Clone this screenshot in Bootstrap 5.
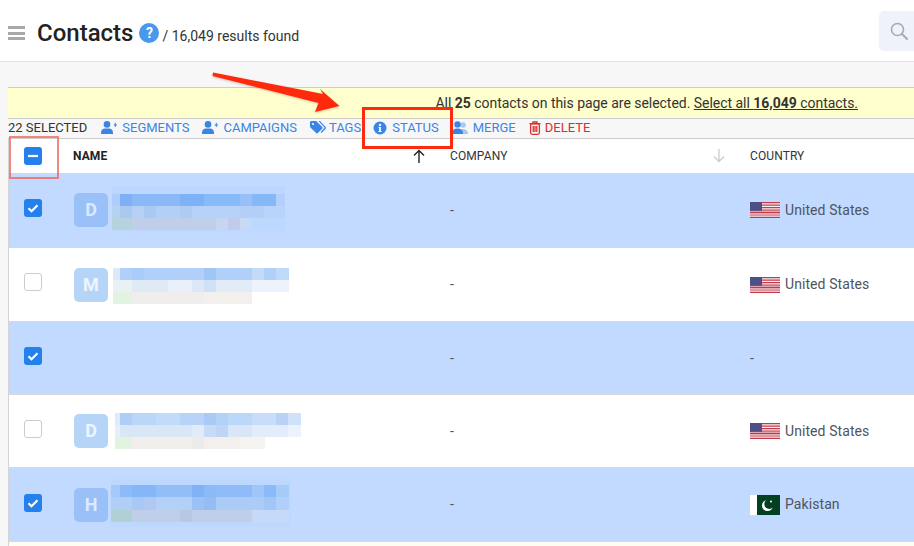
<!DOCTYPE html>
<html lang="en">
<head>
<meta charset="utf-8">
<title>Contacts</title>
<link href="https://cdn.jsdelivr.net/npm/bootstrap@5.3.0/dist/css/bootstrap.min.css" rel="stylesheet">
<style>
html,body{height:546px;overflow:hidden;background:#f7f7f7;font-family:Roboto,"Liberation Sans",sans-serif;color:#333}
.stage{position:relative;width:914px;height:546px;overflow:hidden}
.topbar{height:62px;background:#fff;border-bottom:1px solid #e5e5e5;padding:5px 0 0 8px}
.burger{width:17px;height:14px;margin-right:12px;display:flex;flex-direction:column;justify-content:space-between}
.burger i{display:block;height:3px;background:#a8a8a8}
.page-title{font-size:24px;font-weight:500;color:#222;line-height:30px;margin:0 6px 0 0}
.helpdot{width:20px;height:20px;border-radius:50%;background:#4a98ec;color:#fff;font-size:14px;font-weight:700;line-height:20px;text-align:center;margin-right:3px}
.found{font-size:14px;color:#333;padding-top:7px}
.findbtn{width:45px;height:40px;background:#eff2f8;border-radius:5px;margin:-5px -10px 0 0;padding-left:10px}
.spacerband{height:25px;background:#f7f7f7}
.noticeband{height:32px;margin-left:8px;background:#ffffcd;border-top:1px solid #ccc;border-bottom:1px solid #ccc;padding-right:56px;font-size:14px;line-height:30px;color:#333;letter-spacing:-.03px}
.noticeband a{color:#333;text-decoration:underline}
.actionbar{height:20px;margin-left:8px;font-size:13px;line-height:18px;padding-bottom:2px;border-bottom:1px solid #ccc;background:#f7f7f7;white-space:nowrap}
.actionbar span.tally{color:#333;margin-right:14px}
.act{color:#3a85e4;display:inline-flex;align-items:center;gap:5px;margin-right:13px}
.act.tagged{gap:3px;margin-right:12px}
.act.danger{color:#d9302c;gap:4px}
.gridwrap{margin-left:8px;border-left:1px solid #d4d4d4;background:#fff;height:408px;overflow:hidden}
.peopletable{table-layout:fixed;width:905px;margin:0;--bs-table-bg:transparent;border-collapse:separate;border-spacing:0}
.peopletable th,.peopletable td{padding:0 0 0 8px;vertical-align:middle;border-bottom:1px solid #d9d9d9;overflow:hidden;white-space:nowrap;box-shadow:none;color:#4e5560;font-size:14px;letter-spacing:.08px}
.peopletable th{height:34px;font-size:12px;font-weight:400;color:#333;letter-spacing:.1px;border-bottom:0;padding-bottom:1px}
.peopletable th.strong{font-weight:700;color:#222}
.peopletable td.namecell{padding:0 0 0 9px}
.peopletable th.boxcell{padding:0 0 0 15px}
.peopletable td.boxcell{padding:0 0 5px 15px}
.peopletable tr.tail>td.boxcell{padding-bottom:3px}
.peopletable tr.chosen>td{background:#c2daff}
.peopletable tr.plain>td{background:#fff}
.peopletable tr.lastrow>td{background:#fffdf0;height:70px}
.peopletable tr.r75>td{height:75px}
.r74{height:74px}.r73{height:73px}
.tick{display:block;width:18px;height:18px;border-radius:3px;background:#2480ea}
.tick svg{display:block}
.tick.blank{background:#fff;border:1px solid #ccc}
.headcell{display:flex;justify-content:space-between;align-items:center;padding-right:17px}
.initial{width:34px;height:34px;border-radius:5px;font-size:18px;font-weight:700;line-height:34px;text-align:center;flex:none;letter-spacing:0}
.chosen .initial{background:#99c1f8;color:#dbeafe}
.plain .initial{background:#b6d4f8;color:#eef5fe}
.namecell svg{display:block;flex:none;filter:blur(.6px)}
.flagged{display:flex;align-items:center;gap:5px}
.mark-box{position:absolute;border-style:solid;pointer-events:none}
.box-a{left:362px;top:107px;width:91px;height:42px;border-width:3px;border-color:#ff2a0d}
.box-b{left:9px;top:136px;width:50px;height:43px;border-width:2px;border-color:rgba(238,96,84,.75)}
.arrow-layer{position:absolute;left:205px;top:65px;pointer-events:none;filter:drop-shadow(0 1px 1px rgba(120,60,40,.3))}
</style>
</head>
<body>
<div class="stage">
  <header class="topbar d-flex align-items-center">
    <div class="burger"><i></i><i></i><i></i></div>
    <h1 class="page-title">Contacts</h1>
    <div class="helpdot">?</div>
    <div class="found">/ 16,049 results found</div>
    <div class="findbtn ms-auto d-flex align-items-center">
      <svg width="20" height="20" viewBox="0 0 20 20" fill="none" stroke="#a6aab9" stroke-width="1.6"><circle cx="8.5" cy="8.5" r="6"/><path d="M13 13l5 5" stroke-linecap="round" stroke-width="2"/></svg>
    </div>
  </header>
  <div class="spacerband"></div>
  <div class="noticeband text-end">All <b>25</b> contacts on this page are selected. <a href="#">Select all <b>16,049</b> contacts.</a></div>
  <div class="actionbar d-flex align-items-center">
    <span class="tally">22 SELECTED</span>
    <span class="act"><svg width="16" height="13" viewBox="0 0 16 13" fill="#3a85e4"><circle cx="6" cy="3.4" r="3.3"/><path d="M0 13v-1.6C0 9 2 7.4 4 7.4h4c2 0 4 1.6 4 4V13z"/><path d="M12.700 3.400h1.100v-1.600h1v1.600H16v1h-1.200V6h-1V4.400h-1.100z"/></svg>SEGMENTS</span>
    <span class="act"><svg width="16" height="13" viewBox="0 0 16 13" fill="#3a85e4"><circle cx="6" cy="3.4" r="3.3"/><path d="M0 13v-1.6C0 9 2 7.4 4 7.4h4c2 0 4 1.6 4 4V13z"/><path d="M12.700 3.400h1.100v-1.600h1v1.600H16v1h-1.200V6h-1V4.400h-1.100z"/></svg>CAMPAIGNS</span>
    <span class="act tagged"><svg width="16" height="13" viewBox="0 0 16 13" fill="#3a85e4"><path d="M0 1.300C0 .6.600 0 1.300 0h4.400c.4 0 .7.1 1 .4l5.500 5.500c.5.5.5 1.300 0 1.800l-4.300 4.300c-.5.500-1.300.500-1.800 0L.4 6.500C.1 6.200 0 5.900 0 5.500z"/><path d="M8.500 0h1c.4 0 .7.100 1 .4l5.100 5.500c.5.5.5 1.300 0 1.800l-4 4.200-.9-.9 3.900-4.200z"/><circle cx="3" cy="3" r="1.100" fill="#f7f7f7"/></svg>TAGS</span>
    <span class="act"><svg width="14" height="14" viewBox="0 0 14 14"><circle cx="7" cy="7" r="6.500" fill="#3a85e4"/><circle cx="7" cy="4" r="1.200" fill="#fff"/><path d="M5.600 6h2.300v4h.7v1H5.400v-1h.8V7h-.6z" fill="#fff"/></svg>STATUS</span>
    <span class="act"><svg width="16" height="13" viewBox="0 0 16 13"><circle cx="11" cy="4" r="2.800" fill="#a9c8ef"/><path d="M7 13c0-3.500 1.500-5 4-5s5 1.500 5 5z" fill="#a9c8ef"/><circle cx="5.500" cy="3.400" r="3.200" fill="#3a85e4"/><path d="M0 13c0-3.800 2-5.500 5.500-5.500S11 9.200 11 13z" fill="#3a85e4"/></svg>MERGE</span>
    <span class="act danger"><svg width="12" height="14" viewBox="0 0 12 14" fill="none" stroke="#d9302c" stroke-width="1.300"><path d="M.5 2.700h11M4 2.500V1h4v1.500"/><rect x="1.600" y="2.800" width="8.800" height="10.500" rx="1.500"/><path d="M4.200 5v6M6 5v6M7.800 5v6"/></svg>DELETE</span>
  </div>
  <div class="gridwrap">
    <table class="table peopletable">
      <colgroup><col style="width:56px"><col style="width:377px"><col style="width:300px"><col style="width:172px"></colgroup>
      <thead>
        <tr>
          <th class="boxcell"><span class="tick"><svg width="18" height="18" viewBox="0 0 18 18"><path d="M4 9h10" stroke="#fff" stroke-width="2.200"/></svg></span></th>
          <th class="strong"><div class="headcell"><span>NAME</span><svg width="12" height="14" viewBox="0 0 12 14" fill="none" stroke="#222" stroke-width="1.400"><path d="M6 14V1.500M1 6.500l5-5 5 5"/></svg></div></th>
          <th><div class="headcell"><span>COMPANY</span><svg width="12" height="14" viewBox="0 0 12 14" fill="none" stroke="#cfcfcf" stroke-width="1.400"><path d="M6 0v12.500M1 7.500l5 5 5-5"/></svg></div></th>
          <th>COUNTRY</th>
        </tr>
      </thead>
      <tbody>
        <tr class="chosen r75">
          <td class="boxcell"><span class="tick"><svg width="18" height="18" viewBox="0 0 18 18"><path d="M4.500 9.200l3 3 6-6" fill="none" stroke="#fff" stroke-width="2.200"/></svg></span></td>
          <td class="namecell"><div class="d-flex align-items-center"><div class="initial">D</div>
            <svg width="200" height="60" viewBox="108 180 200 60"><rect x="112" y="186" width="173" height="45" fill="#bcd6fd"/><g>
            <rect x="112" y="194" width="8" height="12" fill="#aecdfb"/><rect x="120" y="194" width="12" height="12" fill="#7fb0f7"/><rect x="132" y="194" width="48" height="12" fill="#8bb9f8"/><rect x="180" y="194" width="24" height="12" fill="#7eb2f7"/><rect x="204" y="194" width="36" height="12" fill="#88b9f9"/><rect x="240" y="194" width="12" height="12" fill="#97c0f8"/><rect x="252" y="194" width="24" height="12" fill="#86b8f8"/><rect x="276" y="194" width="9" height="12" fill="#b3d0fc"/>
            <rect x="112" y="206" width="8" height="12" fill="#b6d2f3"/><rect x="120" y="206" width="12" height="12" fill="#aac9ef"/><rect x="132" y="206" width="12" height="12" fill="#b5cff5"/><rect x="144" y="206" width="12" height="12" fill="#a9c9f3"/><rect x="156" y="206" width="24" height="12" fill="#b2cff5"/><rect x="180" y="206" width="12" height="12" fill="#aecbf2"/><rect x="192" y="206" width="48" height="12" fill="#b7d2f8"/><rect x="240" y="206" width="24" height="12" fill="#b3cff8"/><rect x="264" y="206" width="21" height="12" fill="#b9d4fb"/>
            <rect x="112" y="218" width="20" height="12" fill="#b4d3dc"/><rect x="132" y="218" width="84" height="12" fill="#c0cfe9"/><rect x="216" y="218" width="12" height="12" fill="#c6d6f2"/><rect x="228" y="218" width="12" height="12" fill="#c0cce9"/><rect x="240" y="218" width="12" height="12" fill="#c8d9f6"/><rect x="252" y="218" width="33" height="12" fill="#bbd8fd"/></g></svg></div></td>
          <td>-</td>
          <td><div class="flagged"><svg width="30" height="16" viewBox="0 0 30 16"><rect width="30" height="16" fill="#f3f3f6"/><path d="M0 0h30v1.200H0zM0 2.500h30v1.200H0zM0 5h30v1.200H0zM0 7.500h30v1.200H0zM0 10h30v1.200H0zM0 12.400h30v1.200H0zM0 14.800h30V16H0z" fill="#c23b4a"/><path d="M0 8.700h30v1.300H0zM0 11.200h30v1.200H0z" fill="#e2a3ad"/><rect width="12" height="8.800" fill="#4d4f86"/></svg>United States</div></td>
        </tr>
        <tr class="plain r74">
          <td class="boxcell"><span class="tick blank"></span></td>
          <td class="namecell"><div class="d-flex align-items-center"><div class="initial">M</div>
            <svg width="200" height="60" viewBox="108 254 200 60"><rect x="113" y="267" width="7" height="12" fill="#dce9fb"/><rect x="120" y="267" width="12" height="12" fill="#b0d0f9"/><rect x="132" y="267" width="12" height="12" fill="#a9ccf8"/><rect x="144" y="267" width="60" height="12" fill="#b1d0f9"/><rect x="204" y="267" width="12" height="12" fill="#a0c6f6"/><rect x="216" y="267" width="36" height="12" fill="#b1d0f9"/><rect x="252" y="267" width="12" height="12" fill="#c3dbf8"/><rect x="264" y="267" width="12" height="12" fill="#b1d0f7"/><rect x="276" y="267" width="13" height="12" fill="#bfd9f9"/>
            <rect x="113" y="279" width="19" height="12" fill="#e9f1f5"/><rect x="132" y="279" width="36" height="12" fill="#dfeaf6"/><rect x="168" y="279" width="24" height="12" fill="#e9f0fa"/><rect x="192" y="279" width="12" height="12" fill="#dce8f7"/><rect x="204" y="279" width="12" height="12" fill="#cfe1f6"/><rect x="216" y="279" width="36" height="12" fill="#e1ecf8"/><rect x="252" y="279" width="37" height="12" fill="#ecf3fc"/>
            <rect x="113" y="291" width="19" height="12" fill="#e3f3e2"/><rect x="132" y="291" width="72" height="12" fill="#f0eeec"/><rect x="204" y="291" width="48" height="12" fill="#f2efed"/></svg></div></td>
          <td>-</td>
          <td><div class="flagged"><svg width="30" height="16" viewBox="0 0 30 16"><rect width="30" height="16" fill="#f3f3f6"/><path d="M0 0h30v1.200H0zM0 2.500h30v1.200H0zM0 5h30v1.200H0zM0 7.500h30v1.200H0zM0 10h30v1.200H0zM0 12.400h30v1.200H0zM0 14.800h30V16H0z" fill="#c23b4a"/><path d="M0 8.700h30v1.300H0zM0 11.200h30v1.200H0z" fill="#e2a3ad"/><rect width="12" height="8.800" fill="#4d4f86"/></svg>United States</div></td>
        </tr>
        <tr class="chosen r73">
          <td class="boxcell"><span class="tick"><svg width="18" height="18" viewBox="0 0 18 18"><path d="M4.500 9.200l3 3 6-6" fill="none" stroke="#fff" stroke-width="2.200"/></svg></span></td>
          <td class="namecell"></td>
          <td>-</td>
          <td>-</td>
        </tr>
        <tr class="plain r73">
          <td class="boxcell"><span class="tick blank"></span></td>
          <td class="namecell"><div class="d-flex align-items-center"><div class="initial">D</div>
            <svg width="200" height="60" viewBox="108 401 200 60"><rect x="115" y="413" width="5" height="12" fill="#dfebfb"/><rect x="120" y="413" width="12" height="12" fill="#aecef8"/><rect x="132" y="413" width="24" height="12" fill="#bad6f9"/><rect x="156" y="413" width="24" height="12" fill="#c2dbf9"/><rect x="180" y="413" width="24" height="12" fill="#b7d4f8"/><rect x="204" y="413" width="12" height="12" fill="#a8caf5"/><rect x="216" y="413" width="12" height="12" fill="#b4d2f8"/><rect x="228" y="413" width="24" height="12" fill="#bcd8f9"/><rect x="252" y="413" width="24" height="12" fill="#c7ddf9"/><rect x="276" y="413" width="12" height="12" fill="#b7d2f5"/><rect x="288" y="413" width="13" height="12" fill="#d0e1fa"/>
            <rect x="115" y="425" width="5" height="12" fill="#e6f0f5"/><rect x="120" y="425" width="72" height="12" fill="#d8e6f6"/><rect x="192" y="425" width="12" height="12" fill="#e2ecf8"/><rect x="204" y="425" width="12" height="12" fill="#c6dcf6"/><rect x="216" y="425" width="12" height="12" fill="#bfd5f5"/><rect x="228" y="425" width="24" height="12" fill="#d8e6f7"/><rect x="252" y="425" width="36" height="12" fill="#e2ecfa"/><rect x="288" y="425" width="13" height="12" fill="#ecf3fd"/>
            <rect x="115" y="437" width="17" height="12" fill="#e3f3e2"/><rect x="132" y="437" width="60" height="12" fill="#f1eeec"/><rect x="192" y="437" width="12" height="12" fill="#ebebe9"/><rect x="204" y="437" width="36" height="12" fill="#f3efed"/><rect x="240" y="437" width="25" height="12" fill="#f5f4f1"/></svg></div></td>
          <td>-</td>
          <td><div class="flagged"><svg width="30" height="16" viewBox="0 0 30 16"><rect width="30" height="16" fill="#f3f3f6"/><path d="M0 0h30v1.200H0zM0 2.500h30v1.200H0zM0 5h30v1.200H0zM0 7.500h30v1.200H0zM0 10h30v1.200H0zM0 12.400h30v1.200H0zM0 14.800h30V16H0z" fill="#c23b4a"/><path d="M0 8.700h30v1.300H0zM0 11.200h30v1.200H0z" fill="#e2a3ad"/><rect width="12" height="8.800" fill="#4d4f86"/></svg>United States</div></td>
        </tr>
        <tr class="chosen r74 tail">
          <td class="boxcell"><span class="tick"><svg width="18" height="18" viewBox="0 0 18 18"><path d="M4.500 9.200l3 3 6-6" fill="none" stroke="#fff" stroke-width="2.200"/></svg></span></td>
          <td class="namecell"><div class="d-flex align-items-center"><div class="initial">H</div>
            <svg width="200" height="60" viewBox="108 475 200 60"><rect x="111" y="479" width="180" height="48" fill="#bdd7fd"/><rect x="111" y="485" width="9" height="12" fill="#a4c8f9"/><rect x="120" y="485" width="12" height="12" fill="#8dbaf8"/><rect x="132" y="485" width="24" height="12" fill="#85b6f7"/><rect x="156" y="485" width="36" height="12" fill="#92bef8"/><rect x="192" y="485" width="12" height="12" fill="#7fb2f7"/><rect x="204" y="485" width="12" height="12" fill="#8cbaf8"/><rect x="216" y="485" width="36" height="12" fill="#8fbbf8"/><rect x="252" y="485" width="12" height="12" fill="#a0c5f8"/><rect x="264" y="485" width="12" height="12" fill="#8abaf9"/><rect x="276" y="485" width="13" height="12" fill="#a7cbf9"/>
            <rect x="111" y="497" width="21" height="13" fill="#b1cff4"/><rect x="132" y="497" width="12" height="13" fill="#a9c9f4"/><rect x="144" y="497" width="12" height="13" fill="#b1c9f2"/><rect x="156" y="497" width="36" height="13" fill="#b3d0f6"/><rect x="192" y="497" width="12" height="13" fill="#9cc2f5"/><rect x="204" y="497" width="12" height="13" fill="#95bcf3"/><rect x="216" y="497" width="48" height="13" fill="#abccf7"/><rect x="264" y="497" width="12" height="13" fill="#a2c6f8"/><rect x="276" y="497" width="13" height="13" fill="#b0d0fb"/>
            <rect x="111" y="510" width="21" height="12" fill="#b1d0d6"/><rect x="132" y="510" width="48" height="12" fill="#c0cfe9"/><rect x="180" y="510" width="12" height="12" fill="#b8c8e4"/><rect x="192" y="510" width="60" height="12" fill="#bfcfe9"/><rect x="252" y="510" width="37" height="12" fill="#c6d9f8"/></svg></div></td>
          <td>-</td>
          <td><div class="flagged"><svg width="30" height="20" viewBox="0 0 30 20"><rect width="30" height="20" fill="#fff"/><rect x="7" width="23" height="20" fill="#024021"/><circle cx="17.500" cy="10.500" r="5.500" fill="#fff"/><circle cx="19.300" cy="9" r="5" fill="#024021"/><circle cx="21" cy="6.500" r="1" fill="#fff"/></svg>Pakistan</div></td>
        </tr>
        <tr class="lastrow"><td></td><td></td><td></td><td></td></tr>
      </tbody>
    </table>
  </div>
  <div class="mark-box box-a"></div>
  <div class="mark-box box-b"></div>
  <svg class="arrow-layer" width="145" height="55" viewBox="205 65 145 55"><polygon points="213,72.500 323,94 320,89 339.500,106 315,112 318.500,103 212.500,76" fill="#ff2a0d"/></svg>
</div>
</body>
</html>
